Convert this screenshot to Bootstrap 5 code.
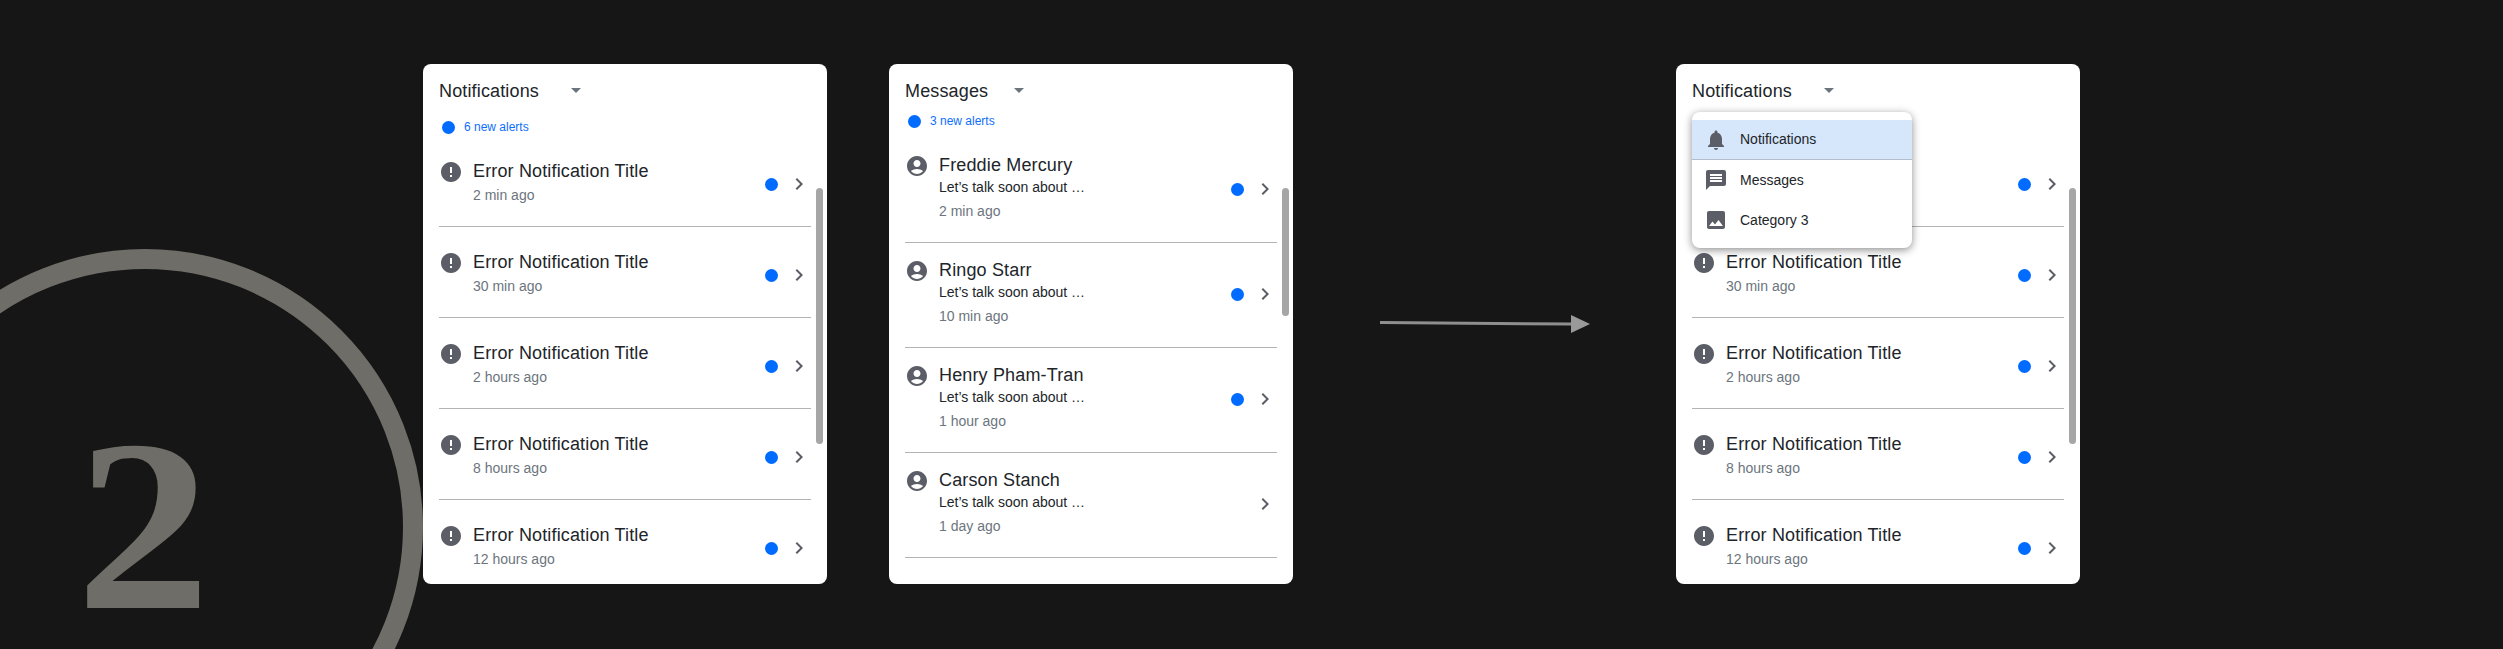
<!DOCTYPE html>
<html lang="en">
<head>
  <meta charset="UTF-8" />
  <meta name="viewport" content="width=device-width, initial-scale=1.0"/>
  <title>Notification panel flow</title>
  <link href="https://cdn.jsdelivr.net/npm/bootstrap@5.3.0/dist/css/bootstrap.min.css" rel="stylesheet">
  <style>
    body { background: #161616; font-family: "Liberation Sans", Arial, sans-serif; color: #212529; overflow: hidden; }
    .stage { height: 649px; padding-top: 64px; overflow: hidden; }

    /* step marker on the left */
    .step-mark { width: 423px; flex: none; height: 585px; position: relative; }
    .step-ring { position: absolute; left: -133px; top: 185px; width: 556px; height: 556px; border: 20px solid #6f6d67; border-radius: 50%; }
    .step-num { position: absolute; left: 82px; top: 364px; font: 700 245px/.8 "Liberation Serif", "Times New Roman", serif; color: #6f6d67; transform: scaleX(1.1); }

    /* panels */
    .panel { width: 404px; height: 520px; flex: none; overflow: hidden; position: relative; padding: 16px; }
    .panel-toggle { padding: 0; border: 0; font-size: 18px; line-height: 22px; letter-spacing: .15px; color: #212529; }
    .panel-toggle::after { margin-left: 32px; border-top-color: #6c757d; vertical-align: .2em; }
    .panel-toggle.short-gap::after { margin-left: 26px; }
    .alert-line { height: 18px; margin-top: 16px; padding-left: 2.5px; gap: 9.5px; font-size: 12px; line-height: 18px; }
    .alert-line.tight { margin-top: 10px; margin-bottom: 8px; }
    .blue-dot { width: 13px; height: 13px; border-radius: 50%; background: #006bff; flex: none; }
    .alert-line .blue-dot { margin-top: 3px; }

    .feed-row { padding: 24px 0 21px; border-bottom: 1px solid #b3b3b6; background: transparent; gap: 10px; }
    .feed-row.msg { padding: 16px 0 21px; }
    .list-group-flush > .feed-row.msg:last-child { border-bottom-width: 1px; }
    .feed-title { font-size: 18px; line-height: 22px; letter-spacing: .15px; }
    .feed-time { font-size: 14px; line-height: 20px; margin-top: 3px; color: #6c757d; }
    .msg .feed-title { margin-bottom: 1px; }
    .msg .feed-time { margin-top: 4px; }
    .feed-text { font-size: 14px; line-height: 20px; }
    .feed-side { margin-top: 12px; gap: 9px; }
    .msg .feed-side { margin-top: 23px; }

    .ico { width: 24px; height: 24px; fill: #5b5e66; flex: none; }
    .thumb { position: absolute; right: 4px; top: 124px; width: 7px; height: 256px; border-radius: 4px; background: #a6a6a6; }
    .thumb.short { height: 128px; }

    /* open category menu */
    .cat-menu { top: 48px; left: 16px; width: 220px; padding: 8px 0; border: 0; border-radius: 8px; box-shadow: 0 2px 8px rgba(0, 0, 0, .45); }
    .cat-menu .dropdown-item { height: 40px; padding: 0 12px; gap: 12px; font-size: 14px; color: #212529; }
    .cat-menu .dropdown-item.picked { background: #d6e6fb; border-bottom: 1px solid #b3bccb; }

    .flow-gap { width: 62px; flex: none; }
    .flow-arrow { width: 383px; flex: none; height: 520px; }
  </style>
</head>
<body>

<svg width="0" height="0" class="d-none">
  <symbol id="i-error" viewBox="0 0 24 24"><path d="M12 2C6.48 2 2 6.48 2 12s4.48 10 10 10 10-4.48 10-10S17.52 2 12 2zm1 15h-2v-2h2v2zm0-4h-2V7h2v6z"/></symbol>
  <symbol id="i-user" viewBox="0 0 24 24"><path d="M12 2C6.48 2 2 6.48 2 12s4.48 10 10 10 10-4.48 10-10S17.52 2 12 2zm0 4c1.93 0 3.5 1.57 3.5 3.5S13.93 13 12 13s-3.5-1.57-3.5-3.5S10.07 6 12 6zm0 14c-2.03 0-4.43-.82-6.14-2.88C7.55 15.8 9.68 15 12 15s4.45.8 6.14 2.12C16.43 19.18 14.03 20 12 20z"/></symbol>
  <symbol id="i-next" viewBox="0 0 24 24"><path d="M10 6L8.59 7.41 13.17 12l-4.58 4.59L10 18l6-6z"/></symbol>
  <symbol id="i-bell" viewBox="0 0 24 24"><path d="M12 22c1.1 0 2-.9 2-2h-4c0 1.1.89 2 2 2zm6-6v-5c0-3.07-1.64-5.64-4.5-6.32V4c0-.83-.67-1.5-1.5-1.5s-1.5.67-1.5 1.5v.68C7.63 5.36 6 7.92 6 11v5l-2 2v1h16v-1l-2-2z"/></symbol>
  <symbol id="i-msg" viewBox="0 0 24 24"><path d="M20 2H4c-1.1 0-1.99.9-1.99 2L2 22l4-4h14c1.1 0 2-.9 2-2V4c0-1.1-.9-2-2-2zm-2 12H6v-2h12v2zm0-3H6V9h12v2zm0-3H6V6h12v2z"/></symbol>
  <symbol id="i-img" viewBox="0 0 24 24"><path d="M21 19V5c0-1.1-.9-2-2-2H5c-1.1 0-2 .9-2 2v14c0 1.1.9 2 2 2h14c1.1 0 2-.9 2-2zM8.5 13.5l2.5 3.01L14.5 12l4.5 6H5l3.5-4.5z"/></symbol>
</svg>

<main class="stage d-flex align-items-start">

  <!-- Step marker -->
  <div class="step-mark">
    <div class="step-ring"></div>
    <div class="step-num">2</div>
  </div>

  <!-- Notifications panel -->
  <section class="panel card border-0 rounded-3">
    <div class="d-flex"><button class="btn dropdown-toggle panel-toggle" type="button">Notifications</button></div>
    <div class="alert-line d-flex text-primary"><span class="blue-dot"></span><span>6 new alerts</span></div>
    <ul class="list-group list-group-flush">
      <li class="feed-row list-group-item d-flex align-items-start"><svg class="ico"><use href="#i-error"/></svg><div class="flex-grow-1"><div class="feed-title">Error Notification Title</div><div class="feed-time">2 min ago</div></div><div class="feed-side d-flex align-items-center"><span class="blue-dot"></span><svg class="ico"><use href="#i-next"/></svg></div></li>
      <li class="feed-row list-group-item d-flex align-items-start"><svg class="ico"><use href="#i-error"/></svg><div class="flex-grow-1"><div class="feed-title">Error Notification Title</div><div class="feed-time">30 min ago</div></div><div class="feed-side d-flex align-items-center"><span class="blue-dot"></span><svg class="ico"><use href="#i-next"/></svg></div></li>
      <li class="feed-row list-group-item d-flex align-items-start"><svg class="ico"><use href="#i-error"/></svg><div class="flex-grow-1"><div class="feed-title">Error Notification Title</div><div class="feed-time">2 hours ago</div></div><div class="feed-side d-flex align-items-center"><span class="blue-dot"></span><svg class="ico"><use href="#i-next"/></svg></div></li>
      <li class="feed-row list-group-item d-flex align-items-start"><svg class="ico"><use href="#i-error"/></svg><div class="flex-grow-1"><div class="feed-title">Error Notification Title</div><div class="feed-time">8 hours ago</div></div><div class="feed-side d-flex align-items-center"><span class="blue-dot"></span><svg class="ico"><use href="#i-next"/></svg></div></li>
      <li class="feed-row list-group-item d-flex align-items-start"><svg class="ico"><use href="#i-error"/></svg><div class="flex-grow-1"><div class="feed-title">Error Notification Title</div><div class="feed-time">12 hours ago</div></div><div class="feed-side d-flex align-items-center"><span class="blue-dot"></span><svg class="ico"><use href="#i-next"/></svg></div></li>
    </ul>
    <div class="thumb"></div>
  </section>

  <div class="flow-gap"></div>

  <!-- Messages panel -->
  <section class="panel card border-0 rounded-3">
    <div class="d-flex"><button class="btn dropdown-toggle panel-toggle short-gap" type="button">Messages</button></div>
    <div class="alert-line tight d-flex text-primary"><span class="blue-dot"></span><span>3 new alerts</span></div>
    <ul class="list-group list-group-flush">
      <li class="feed-row msg list-group-item d-flex align-items-start"><svg class="ico"><use href="#i-user"/></svg><div class="flex-grow-1"><div class="feed-title">Freddie Mercury</div><div class="feed-text">Let’s talk soon about …</div><div class="feed-time">2 min ago</div></div><div class="feed-side d-flex align-items-center"><span class="blue-dot"></span><svg class="ico"><use href="#i-next"/></svg></div></li>
      <li class="feed-row msg list-group-item d-flex align-items-start"><svg class="ico"><use href="#i-user"/></svg><div class="flex-grow-1"><div class="feed-title">Ringo Starr</div><div class="feed-text">Let’s talk soon about …</div><div class="feed-time">10 min ago</div></div><div class="feed-side d-flex align-items-center"><span class="blue-dot"></span><svg class="ico"><use href="#i-next"/></svg></div></li>
      <li class="feed-row msg list-group-item d-flex align-items-start"><svg class="ico"><use href="#i-user"/></svg><div class="flex-grow-1"><div class="feed-title">Henry Pham-Tran</div><div class="feed-text">Let’s talk soon about …</div><div class="feed-time">1 hour ago</div></div><div class="feed-side d-flex align-items-center"><span class="blue-dot"></span><svg class="ico"><use href="#i-next"/></svg></div></li>
      <li class="feed-row msg list-group-item d-flex align-items-start"><svg class="ico"><use href="#i-user"/></svg><div class="flex-grow-1"><div class="feed-title">Carson Stanch</div><div class="feed-text">Let’s talk soon about …</div><div class="feed-time">1 day ago</div></div><div class="feed-side d-flex align-items-center"><svg class="ico"><use href="#i-next"/></svg></div></li>
    </ul>
    <div class="thumb short"></div>
  </section>

  <!-- Arrow -->
  <div class="flow-arrow d-flex align-items-center justify-content-center">
    <svg width="210" height="20" viewBox="0 0 210 20">
      <path d="M0 7 L192 8.5 V11.5 L0 10z" fill="#8f8f8f"/>
      <path d="M191 1 L210 10 L191 19z" fill="#999"/>
    </svg>
  </div>

  <!-- Notifications panel, menu open -->
  <section class="panel card border-0 rounded-3">
    <div class="d-flex"><button class="btn dropdown-toggle panel-toggle" type="button">Notifications</button></div>
    <div class="alert-line d-flex text-primary invisible"><span class="blue-dot"></span><span>6 new alerts</span></div>
    <ul class="list-group list-group-flush">
      <li class="feed-row list-group-item d-flex align-items-start"><svg class="ico invisible"><use href="#i-error"/></svg><div class="flex-grow-1 invisible"><div class="feed-title">Error Notification Title</div><div class="feed-time">2 min ago</div></div><div class="feed-side d-flex align-items-center"><span class="blue-dot"></span><svg class="ico"><use href="#i-next"/></svg></div></li>
      <li class="feed-row list-group-item d-flex align-items-start"><svg class="ico"><use href="#i-error"/></svg><div class="flex-grow-1"><div class="feed-title">Error Notification Title</div><div class="feed-time">30 min ago</div></div><div class="feed-side d-flex align-items-center"><span class="blue-dot"></span><svg class="ico"><use href="#i-next"/></svg></div></li>
      <li class="feed-row list-group-item d-flex align-items-start"><svg class="ico"><use href="#i-error"/></svg><div class="flex-grow-1"><div class="feed-title">Error Notification Title</div><div class="feed-time">2 hours ago</div></div><div class="feed-side d-flex align-items-center"><span class="blue-dot"></span><svg class="ico"><use href="#i-next"/></svg></div></li>
      <li class="feed-row list-group-item d-flex align-items-start"><svg class="ico"><use href="#i-error"/></svg><div class="flex-grow-1"><div class="feed-title">Error Notification Title</div><div class="feed-time">8 hours ago</div></div><div class="feed-side d-flex align-items-center"><span class="blue-dot"></span><svg class="ico"><use href="#i-next"/></svg></div></li>
      <li class="feed-row list-group-item d-flex align-items-start"><svg class="ico"><use href="#i-error"/></svg><div class="flex-grow-1"><div class="feed-title">Error Notification Title</div><div class="feed-time">12 hours ago</div></div><div class="feed-side d-flex align-items-center"><span class="blue-dot"></span><svg class="ico"><use href="#i-next"/></svg></div></li>
    </ul>
    <div class="thumb"></div>
    <div class="dropdown-menu show cat-menu">
      <a class="dropdown-item picked d-flex align-items-center" href="#"><svg class="ico"><use href="#i-bell"/></svg>Notifications</a>
      <a class="dropdown-item d-flex align-items-center" href="#"><svg class="ico"><use href="#i-msg"/></svg>Messages</a>
      <a class="dropdown-item d-flex align-items-center" href="#"><svg class="ico"><use href="#i-img"/></svg>Category 3</a>
    </div>
  </section>

</main>

<script src="https://cdn.jsdelivr.net/npm/bootstrap@5.3.0/dist/js/bootstrap.bundle.min.js"></script>
</body>
</html>
